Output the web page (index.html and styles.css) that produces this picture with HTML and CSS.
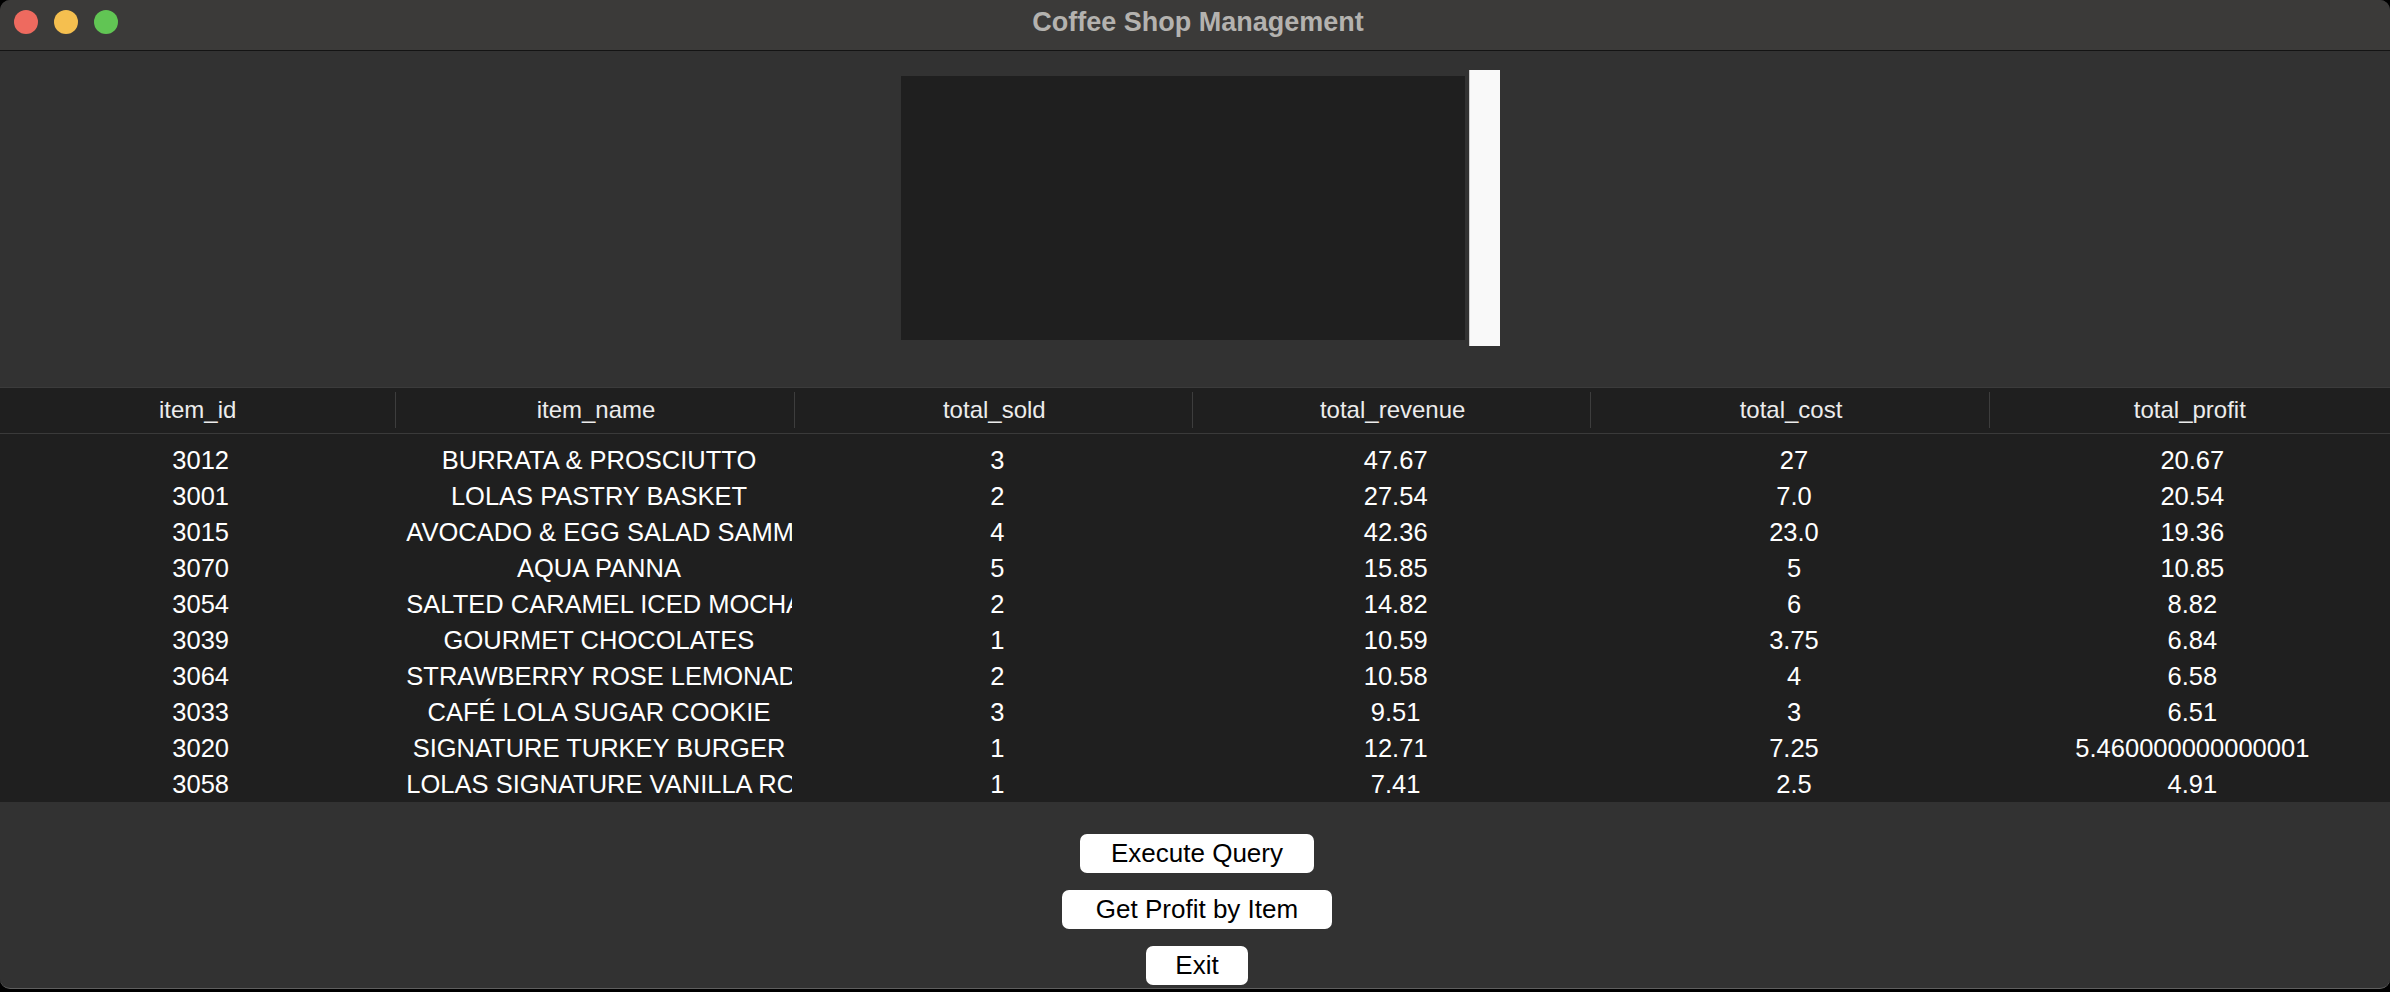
FILE: index.html
```html
<!DOCTYPE html>
<html lang="en">
<head>
<meta charset="utf-8">
<title>Coffee Shop Management</title>
<link rel="stylesheet" href="styles.css">
</head>
<body>
<div class="window">
  <header class="titlebar">
    <div class="lights">
      <span class="light red"></span>
      <span class="light yellow"></span>
      <span class="light green"></span>
    </div>
    <div class="title">Coffee Shop Management</div>
  </header>

  <section class="query-area">
    <div class="query-box"></div>
    <div class="query-scroll"></div>
  </section>

  <section class="table">
    <div class="thead">
      <div class="th">item_id</div>
      <div class="th">item_name</div>
      <div class="th">total_sold</div>
      <div class="th">total_revenue</div>
      <div class="th">total_cost</div>
      <div class="th last">total_profit</div>
    </div>
    <div class="tbody">
      <div class="tr"><div class="td"><span>3012</span></div><div class="td"><span>BURRATA &amp; PROSCIUTTO</span></div><div class="td"><span>3</span></div><div class="td"><span>47.67</span></div><div class="td"><span>27</span></div><div class="td"><span>20.67</span></div></div>
      <div class="tr"><div class="td"><span>3001</span></div><div class="td"><span>LOLAS PASTRY BASKET</span></div><div class="td"><span>2</span></div><div class="td"><span>27.54</span></div><div class="td"><span>7.0</span></div><div class="td"><span>20.54</span></div></div>
      <div class="tr"><div class="td"><span>3015</span></div><div class="td"><span>AVOCADO &amp; EGG SALAD SAMMIE</span></div><div class="td"><span>4</span></div><div class="td"><span>42.36</span></div><div class="td"><span>23.0</span></div><div class="td"><span>19.36</span></div></div>
      <div class="tr"><div class="td"><span>3070</span></div><div class="td"><span>AQUA PANNA</span></div><div class="td"><span>5</span></div><div class="td"><span>15.85</span></div><div class="td"><span>5</span></div><div class="td"><span>10.85</span></div></div>
      <div class="tr"><div class="td"><span>3054</span></div><div class="td"><span>SALTED CARAMEL ICED MOCHA</span></div><div class="td"><span>2</span></div><div class="td"><span>14.82</span></div><div class="td"><span>6</span></div><div class="td"><span>8.82</span></div></div>
      <div class="tr"><div class="td"><span>3039</span></div><div class="td"><span>GOURMET CHOCOLATES</span></div><div class="td"><span>1</span></div><div class="td"><span>10.59</span></div><div class="td"><span>3.75</span></div><div class="td"><span>6.84</span></div></div>
      <div class="tr"><div class="td"><span>3064</span></div><div class="td"><span>STRAWBERRY ROSE LEMONADE</span></div><div class="td"><span>2</span></div><div class="td"><span>10.58</span></div><div class="td"><span>4</span></div><div class="td"><span>6.58</span></div></div>
      <div class="tr"><div class="td"><span>3033</span></div><div class="td"><span>CAFÉ LOLA SUGAR COOKIE</span></div><div class="td"><span>3</span></div><div class="td"><span>9.51</span></div><div class="td"><span>3</span></div><div class="td"><span>6.51</span></div></div>
      <div class="tr"><div class="td"><span>3020</span></div><div class="td"><span>SIGNATURE TURKEY BURGER</span></div><div class="td"><span>1</span></div><div class="td"><span>12.71</span></div><div class="td"><span>7.25</span></div><div class="td"><span>5.460000000000001</span></div></div>
      <div class="tr"><div class="td"><span>3058</span></div><div class="td"><span>LOLAS SIGNATURE VANILLA ROSE LATTE</span></div><div class="td"><span>1</span></div><div class="td"><span>7.41</span></div><div class="td"><span>2.5</span></div><div class="td"><span>4.91</span></div></div>
    </div>
  </section>

  <section class="actions">
    <button class="btn btn-exec">Execute Query</button>
    <button class="btn btn-profit">Get Profit by Item</button>
    <button class="btn btn-exit">Exit</button>
  </section>
</div>
</body>
</html>
```

FILE: styles.css
```css
* { box-sizing: border-box; }

html, body {
  margin: 0;
  padding: 0;
  background: #000000;
  width: 2390px;
  height: 992px;
  overflow: hidden;
}

body {
  font-family: "Liberation Sans", Arial, sans-serif;
}

.window {
  width: 2390px;
  height: 989px;
  background: #323232;
  border-radius: 10px;
  border-bottom: 1px solid #5e5e5e;
  display: flex;
  flex-direction: column;
  overflow: hidden;
}

.titlebar {
  height: 51px;
  flex: 0 0 51px;
  background: #3b3a39;
  border-bottom: 1px solid #141414;
  display: flex;
  align-items: center;
  position: relative;
}

.lights {
  display: flex;
  gap: 16px;
  padding-left: 14px;
  padding-bottom: 6px;
}

.light {
  width: 24px;
  height: 24px;
  border-radius: 50%;
  display: block;
}
.light.red { background: #ee6a5f; }
.light.yellow { background: #f5bf4f; }
.light.green { background: #61c554; }

.title {
  position: absolute;
  left: 0;
  right: 0;
  top: 7px;
  text-align: center;
  color: #b4b2af;
  font-weight: bold;
  font-size: 27px;
  line-height: 30px;
  padding-left: 6px;
}

.query-area {
  flex: 0 0 auto;
  display: flex;
  justify-content: center;
  align-items: center;
  gap: 4px;
  padding-top: 19px;
  padding-left: 10px;
  margin-bottom: 41px;
}

.query-box {
  width: 564px;
  height: 264px;
  background: #1f1f1f;
}

.query-scroll {
  width: 31px;
  height: 276px;
  background: #f9f9f9;
  border-left: 1px solid #cfcfcf;
}

.table {
  flex: 0 0 auto;
  background: #1f1f1f;
  border-top: 1px solid #3b3b3b;
}

.thead {
  display: grid;
  grid-template-columns: repeat(6, 1fr);
  height: 46px;
  border-bottom: 1px solid #3a3a3a;
  align-items: start;
}

.th {
  height: 36px;
  margin-top: 4px;
  line-height: 36px;
  text-align: center;
  color: #ececec;
  font-size: 24px;
  border-right: 1px solid #3d3d3d;
  margin-right: 2px;
}
.th.last { border-right: none; }

.tbody {
  padding-top: 8px;
}

.tr {
  display: grid;
  grid-template-columns: repeat(6, 1fr);
  height: 36px;
}

.td {
  padding: 0 5px 0 8px;
  min-width: 0;
}

.td span {
  display: block;
  overflow: hidden;
  white-space: nowrap;
  text-align: center;
  color: #ffffff;
  font-size: 25.5px;
  line-height: 36px;
}

.actions {
  flex: 1 1 auto;
  display: flex;
  flex-direction: column;
  align-items: center;
  gap: 17px;
  padding-top: 32px;
  padding-left: 4px;
}

.btn {
  height: 39px;
  background: #ffffff;
  color: #000000;
  border: none;
  border-radius: 7px;
  font-family: "Liberation Sans", Arial, sans-serif;
  font-size: 26px;
  line-height: 39px;
  padding: 0;
  text-align: center;
}
.btn-exec { width: 234px; }
.btn-profit { width: 270px; }
.btn-exit { width: 102px; }
```
